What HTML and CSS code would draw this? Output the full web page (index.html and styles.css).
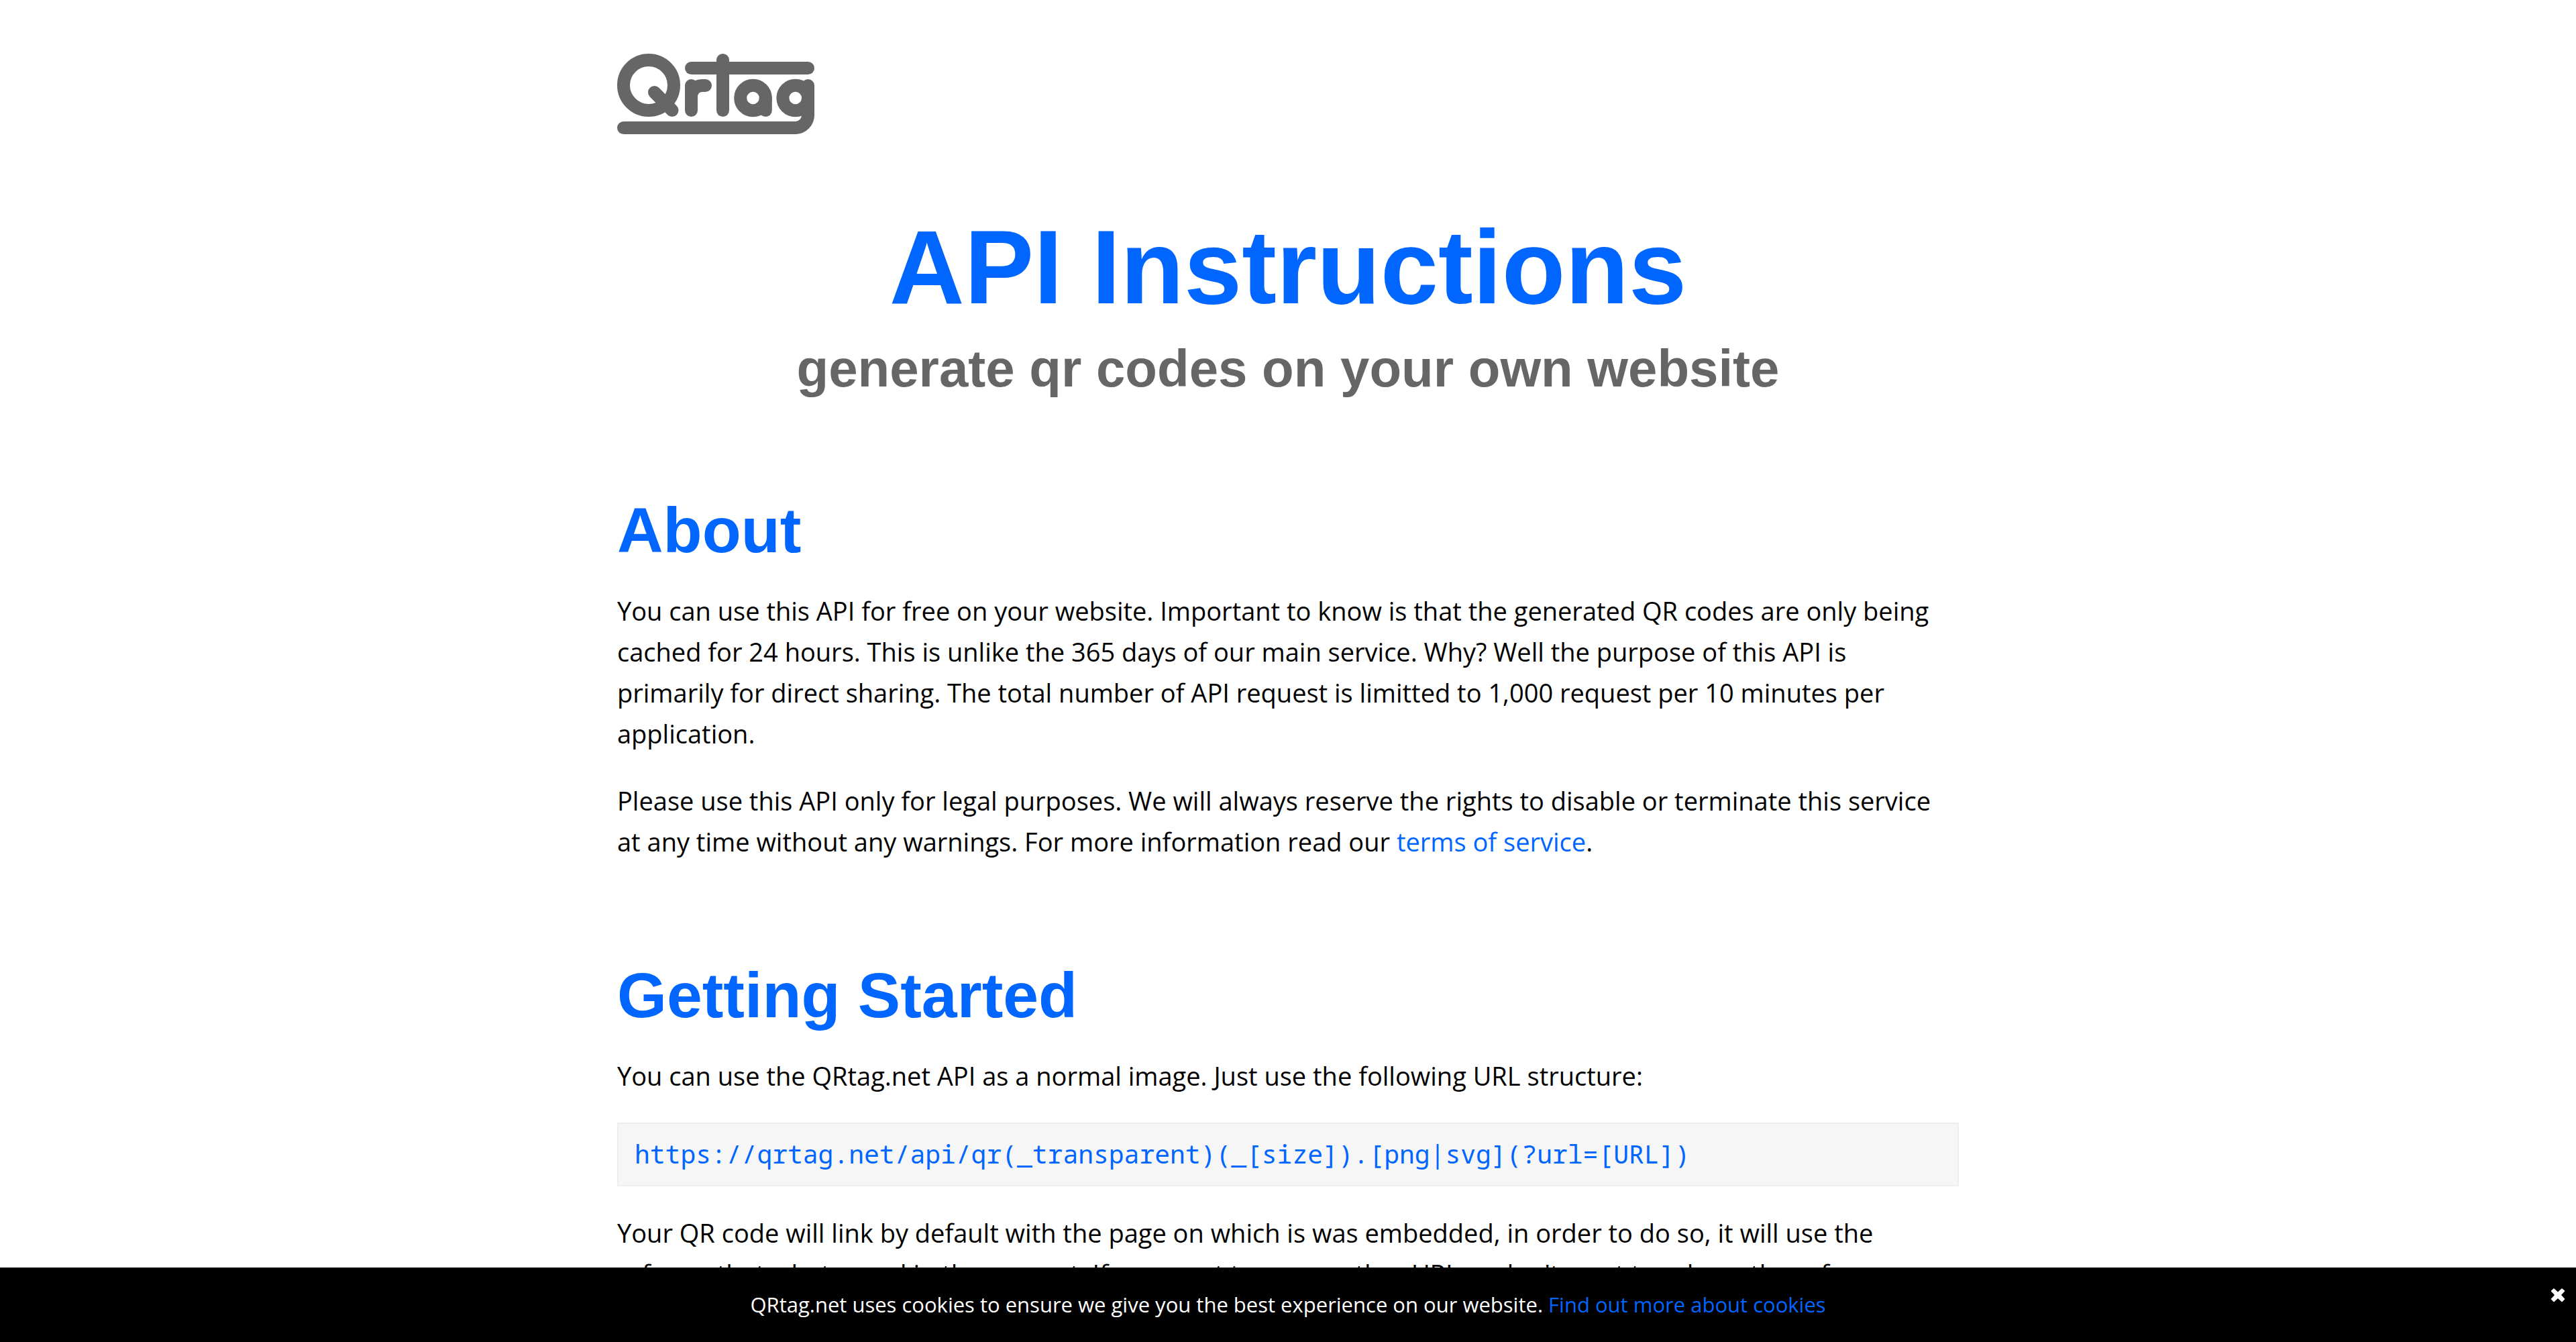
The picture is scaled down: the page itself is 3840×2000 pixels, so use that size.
FILE: index.html
```html
<!DOCTYPE html>
<html lang="en">
<head>
<meta charset="utf-8">
<title>QRtag API Instructions</title>
<link rel="stylesheet" href="styles.css">
</head>
<body>
<div class="page">
  <header class="site-header">
    <a class="logo" href="#" aria-label="QRtag home">
      <svg class="logo-mark" viewBox="0 0 294 120" fill="none" stroke="#666" stroke-width="19" stroke-linecap="round" stroke-linejoin="round" aria-hidden="true">
        <circle cx="47" cy="47" r="37.5"/>
        <path d="M55.5 57.500L82 84.500"/>
        <path d="M110.500 84.500V47.500M110.500 65C110.500 53 118 47.500 127 47.500H131.500"/>
        <path d="M110.500 21.500H284.500"/>
        <path d="M157.500 9.500V84.500"/>
        <circle cx="202.500" cy="66" r="18.800"/>
        <path d="M221.300 66V84.500"/>
        <circle cx="265.700" cy="66" r="18.800"/>
        <path d="M284.500 47.500V91A19 19 0 0 1 266 110.500H9.500"/>
      </svg>
    </a>
  </header>
  <main>
    <div class="hero">
      <h1>API Instructions</h1>
      <p class="tagline">generate qr codes on your own website</p>
    </div>
    <section class="section">
      <h2>About</h2>
      <p>You can use this API for free on your website. Important to know is that the generated QR codes are only being cached for 24 hours. This is unlike the 365 days of our main service. Why? Well the purpose of this API is primarily for direct sharing. The total number of API request is limitted to 1,000 request per 10 minutes per application.</p>
      <p>Please use this API only for legal purposes. We will always reserve the rights to disable or terminate this service at any time without any warnings. For more information read our <a href="#">terms of service</a>.</p>
    </section>
    <section class="section">
      <h2>Getting Started</h2>
      <p>You can use the QRtag.net API as a normal image. Just use the following URL structure:</p>
      <pre class="code"><code>https://qrtag.net/api/qr(_transparent)(_[size]).[png|svg](?url=[URL])</code></pre>
      <p>Your QR code will link by default with the page on which is was embedded, in order to do so, it will use the referrer that whats send in the request. If you want to use another URL or don't want to rely on the referrer,</p>
    </section>
  </main>
</div>
<div class="cookie-bar">
  <p class="cookie-text">QRtag.net uses cookies to ensure we give you the best experience on our website. <a href="#">Find out more about cookies</a></p>
  <button class="cookie-close" type="button" aria-label="Close">
    <svg viewBox="0 0 22 22" aria-hidden="true"><path d="M5 1L11 6.500 17 1 21.500 5 16 11 21.500 17 17 21.500 11 16 5 21.500 .5 17 6 11 .5 5Z" fill="#fff"/></svg>
  </button>
</div>
</body>
</html>
```
FILE: styles.css
```css
* {
  box-sizing: border-box;
}

html,
body {
  height: 100%;
  overflow: hidden;
}

body {
  margin: 0;
  background: #fff;
  color: #000;
  font: 38px/61px "Open Sans", sans-serif;
}

a {
  color: #06f;
  text-decoration: none;
}

p {
  margin: 0 0 39px;
}

.page {
  max-width: 2080px;
  margin: 0 auto;
  padding: 80px 40px 0;
}

.site-header {
  display: flex;
}

.logo-mark {
  display: block;
  width: 294px;
  height: 120px;
}

.hero {
  padding: 114px 0 17px;
  text-align: center;
}

h1,
h2,
.tagline {
  margin: 0;
  font-family: "Arial Rounded MT Bold", "Liberation Sans", sans-serif;
  font-weight: bold;
}

h1 {
  color: #06f;
  font-size: 155px;
  line-height: 170px;
}

.tagline {
  color: #666;
  font-size: 78px;
  line-height: 130px;
}

.section {
  padding-top: 103px;
}

h2 {
  margin-bottom: 34px;
  color: #06f;
  font-size: 95px;
  line-height: 112px;
}

.code {
  margin: 0 0 39px;
  padding: 14px 24px;
  overflow: hidden;
  border: 2px solid #eee;
  background: #f6f6f6;
  color: #06f;
}

.code code {
  font-family: "Noto Sans Mono", "DejaVu Sans Mono", monospace;
  font-size: 38px;
}

.cookie-bar {
  position: fixed;
  right: 0;
  bottom: 0;
  left: 0;
  padding: 25px 60px;
  background: #000;
  color: #fff;
  text-align: center;
}

.cookie-text {
  margin: 0;
  font-size: 31px;
}

.cookie-close {
  position: absolute;
  top: 20px;
  right: 6px;
  padding: 10px;
  border: 0;
  background: none;
}

.cookie-close svg {
  display: block;
  width: 22px;
  height: 22px;
}
```
